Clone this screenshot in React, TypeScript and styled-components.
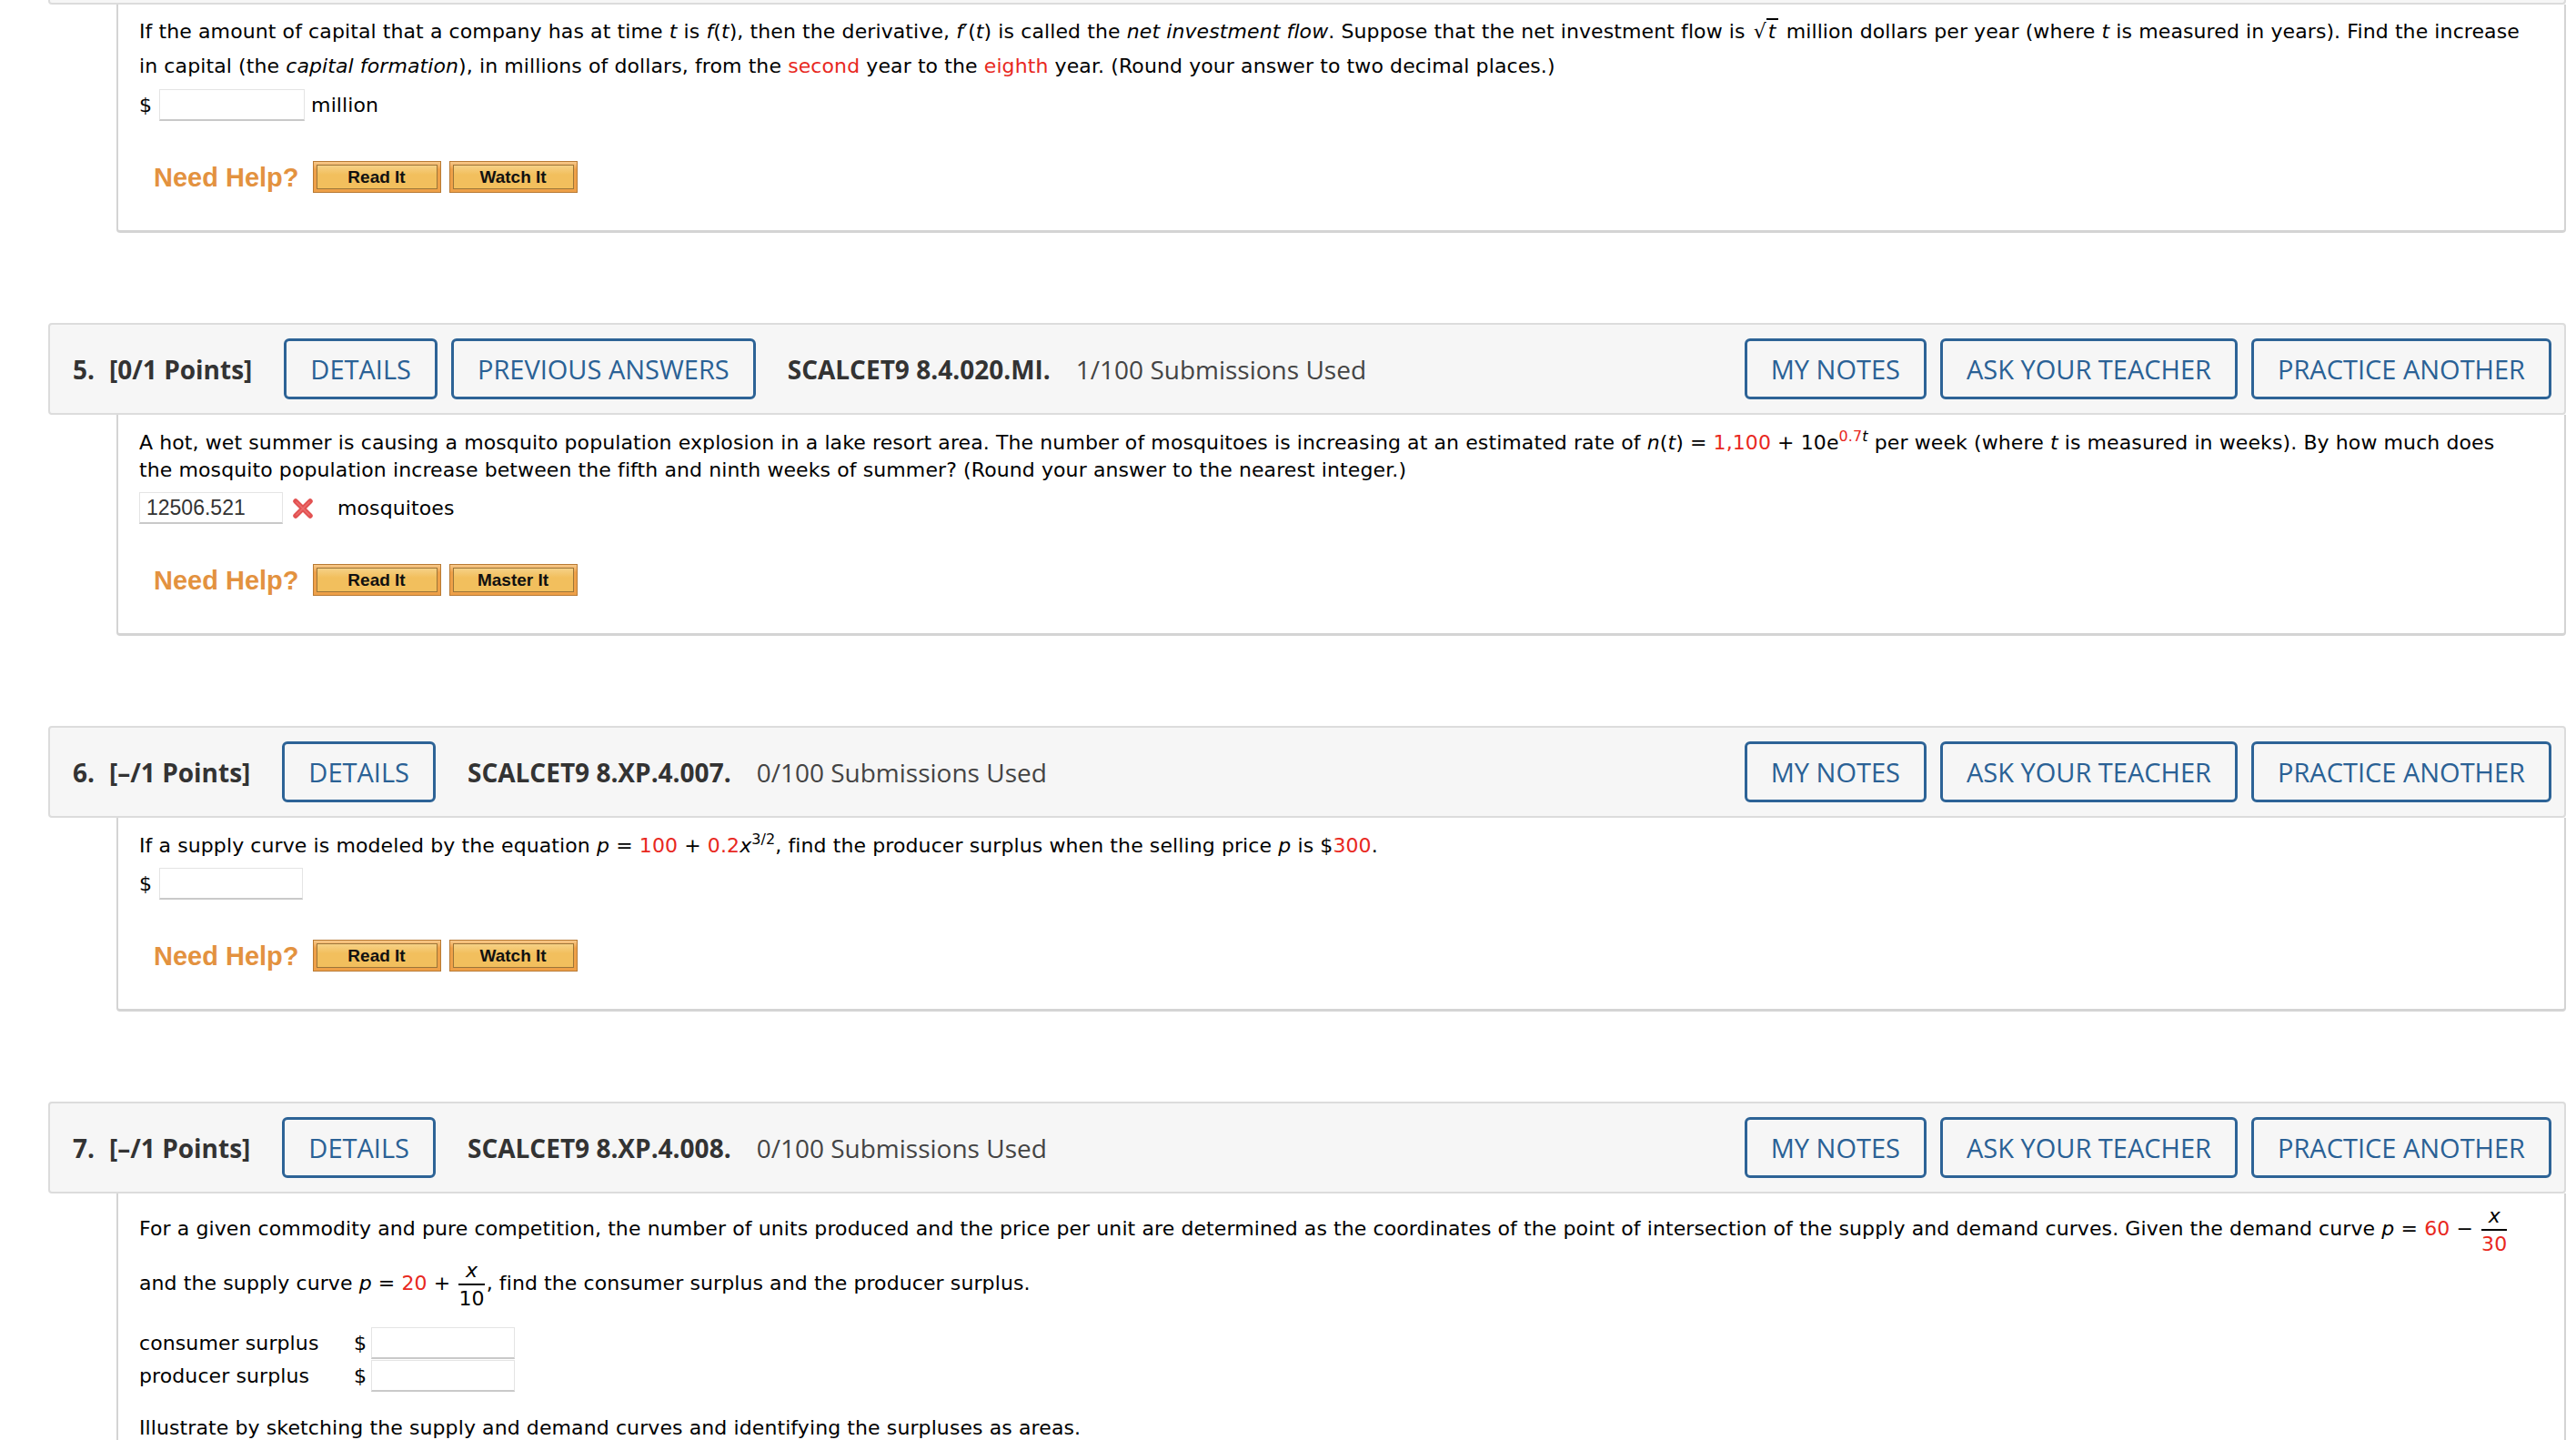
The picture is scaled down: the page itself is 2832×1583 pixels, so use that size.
import React from 'react';
import styled, { createGlobalStyle } from 'styled-components';

const GlobalStyle = createGlobalStyle`
  html, body {
    margin: 0;
    padding: 0;
    background: #fff;
  }
  body {
    font-family: "DejaVu Sans", Verdana, sans-serif;
  }
`;

const Page = styled.div`
  width: 2832px;
  height: 1583px;
  overflow: hidden;
  box-sizing: border-box;
  padding: 0 11px 0 53px;
`;

const Question = styled.section`
  margin-bottom: 99px;
`;

const HeaderStub = styled.div`
  height: 5px;
  box-sizing: border-box;
  background: #f6f6f6;
  border: 2px solid #dcdcdc;
  border-top: none;
  border-radius: 0 0 4px 4px;
`;

const Header = styled.div`
  display: flex;
  align-items: center;
  gap: 15px;
  height: 101px;
  box-sizing: border-box;
  padding: 0 14px 0 25px;
  background: #f6f6f6;
  border: 2px solid #dcdcdc;
  border-radius: 4px;
  font-family: "Open Sans", "DejaVu Sans", sans-serif;
  font-size: 28px;
  color: #333;
  white-space: nowrap;
`;

const Points = styled.div`
  font-weight: 700;
  margin-right: 20px;
  span {
    margin-right: 16px;
  }
`;

const Code = styled.div`
  font-weight: 700;
  margin-left: 20px;
`;

const Used = styled.div`
  margin-left: 13px;
  color: #444;
`;

const Spacer = styled.div`
  flex: 1;
`;

const OutlineButton = styled.button`
  height: 67px;
  box-sizing: border-box;
  padding: 0 26px;
  border: 3px solid #2d6396;
  border-radius: 6px;
  background: transparent;
  font-family: "Open Sans", "DejaVu Sans", sans-serif;
  font-size: 29px;
  color: #2a6195;
  text-transform: uppercase;
  cursor: pointer;
`;

const Body = styled.div<{ $pt?: number }>`
  margin-left: 75px;
  border: 2px solid #d4d4d4;
  border-top: none;
  border-bottom-width: 3px;
  border-radius: 0 0 4px 4px;
  padding: ${(p) => p.$pt ?? 16}px 6px 41px 23px;
  font-size: 22px;
  letter-spacing: 0.1px;
  line-height: 30px;
  color: #000;
`;

const Para = styled.p<{ $lh?: number; $mb?: number }>`
  margin: 0 0 ${(p) => p.$mb ?? 9}px;
  line-height: ${(p) => p.$lh ?? 30}px;
`;

const Red = styled.span`
  color: #e8281e;
`;

const Sup = styled.sup<{ $red?: boolean }>`
  font-size: 16px;
  line-height: 0;
  vertical-align: 9px;
  color: ${(p) => (p.$red ? '#e8281e' : 'inherit')};
`;

const Sqrt = styled.span`
  white-space: nowrap;
  margin: 0 2px;
  span {
    border-top: 2px solid #000;
    padding: 0 2px;
    font-style: italic;
  }
`;

const Frac = styled.span`
  display: inline-flex;
  flex-direction: column;
  align-items: center;
  vertical-align: middle;
  margin: 0 2px;
  line-height: 29px;
`;

const FracTop = styled.span`
  font-style: italic;
  padding: 0 4px;
`;

const FracBottom = styled.span<{ $red?: boolean }>`
  align-self: stretch;
  text-align: center;
  border-top: 2px solid #000;
  color: ${(p) => (p.$red ? '#e8281e' : 'inherit')};
`;

const AnswerRow = styled.div`
  display: flex;
  align-items: center;
  height: 35px;
`;

const Dollar = styled.span`
  margin-right: 8px;
`;

const Field = styled.div<{ $w?: number }>`
  width: ${(p) => p.$w ?? 160}px;
  height: 35px;
  box-sizing: border-box;
  border: 1px solid #e4e4e4;
  border-bottom: 2px solid #c9c9c9;
  background: #fff;
  padding: 0 7px;
  font-family: "Liberation Sans", Arial, sans-serif;
  font-size: 23px;
  letter-spacing: 0;
  line-height: 33px;
  color: #333;
`;

const Unit = styled.span<{ $ml?: number }>`
  margin-left: ${(p) => p.$ml ?? 7}px;
`;

const WrongMark = styled.svg`
  margin-left: 10px;
  flex: none;
`;

const HelpRow = styled.div`
  display: flex;
  align-items: center;
  gap: 9px;
  margin-top: 44px;
  padding-left: 16px;
`;

const NeedHelp = styled.span`
  font-family: "Liberation Sans", Arial, sans-serif;
  font-weight: 700;
  font-size: 29px;
  letter-spacing: 0;
  color: #e3923f;
  margin-right: 6px;
`;

const HelpButton = styled.button`
  width: 141px;
  height: 35px;
  box-sizing: border-box;
  padding: 3px;
  border: 1px solid #b87a34;
  background: linear-gradient(#f7c98a, #eea048 25%, #eea048);
  cursor: pointer;
  span {
    display: flex;
    align-items: center;
    justify-content: center;
    height: 100%;
    box-sizing: border-box;
    border: 1px solid #9c7538;
    background: linear-gradient(#f6d186, #f2bf5d 40%, #f2bf5d);
    font-family: "Liberation Sans", Arial, sans-serif;
    font-weight: 700;
    font-size: 19px;
    color: #111;
  }
`;

const SurplusGrid = styled.div`
  display: grid;
  grid-template-columns: 236px 19px 158px;
  row-gap: 1px;
  align-items: center;
  margin: 17px 0 25px;
`;

const Label = styled.span`
  line-height: 35px;
`;

const Cross = () => (
  <WrongMark width="24" height="24" viewBox="0 0 24 24">
    <path d="M4 4 L20 20 M20 4 L4 20" stroke="#e25252" strokeWidth="5.5" strokeLinecap="round" />
    <path d="M5 5 L19 19 M19 5 L5 19" stroke="#f07a7a" strokeWidth="1.5" strokeLinecap="round" opacity="0.7" />
  </WrongMark>
);

const HeaderButtons = ({ extra }: { extra?: string }) => (
  <>
    <OutlineButton>Details</OutlineButton>
    {extra && <OutlineButton>{extra}</OutlineButton>}
  </>
);

const QuestionHeader = ({
  num,
  points,
  code,
  used,
  extra,
}: {
  num: number;
  points: string;
  code: string;
  used: string;
  extra?: string;
}) => (
  <Header>
    <Points>
      <span>{num}.</span>[{points} Points]
    </Points>
    <HeaderButtons extra={extra} />
    <Code>{code}</Code>
    <Used>{used}</Used>
    <Spacer />
    <OutlineButton>My Notes</OutlineButton>
    <OutlineButton>Ask Your Teacher</OutlineButton>
    <OutlineButton>Practice Another</OutlineButton>
  </Header>
);

const Help = ({ second }: { second: string }) => (
  <HelpRow>
    <NeedHelp>Need Help?</NeedHelp>
    <HelpButton>
      <span>Read It</span>
    </HelpButton>
    <HelpButton>
      <span>{second}</span>
    </HelpButton>
  </HelpRow>
);

export default function App() {
  return (
    <Page>
      <GlobalStyle />

      <Question>
        <HeaderStub />
        <Body $pt={11}>
          <Para $lh={38} $mb={6}>
            If the amount of capital that a company has at time <i>t</i> is <i>f</i>(<i>t</i>), then the
            derivative, <i>f</i>′(<i>t</i>) is called the <i>net investment flow</i>. Suppose that the net
            investment flow is{' '}
            <Sqrt>
              √<span>t</span>
            </Sqrt>{' '}
            million dollars per year (where <i>t</i> is measured in years). Find the increase
            <br />
            in capital (the <i>capital formation</i>), in millions of dollars, from the <Red>second</Red> year
            to the <Red>eighth</Red> year. (Round your answer to two decimal places.)
          </Para>
          <AnswerRow>
            <Dollar>$</Dollar>
            <Field />
            <Unit>million</Unit>
          </AnswerRow>
          <Help second="Watch It" />
        </Body>
      </Question>

      <Question>
        <QuestionHeader
          num={5}
          points="0/1"
          code="SCALCET9 8.4.020.MI."
          used="1/100 Submissions Used"
          extra="Previous Answers"
        />
        <Body>
          <Para>
            A hot, wet summer is causing a mosquito population explosion in a lake resort area. The number
            of mosquitoes is increasing at an estimated rate of <i>n</i>(<i>t</i>) = <Red>1,100</Red> + 10e
            <Sup>
              <Red>0.7</Red>
              <i>t</i>
            </Sup>{' '}
            per week (where <i>t</i> is measured in weeks). By how much does
            <br />
            the mosquito population increase between the fifth and ninth weeks of summer? (Round your
            answer to the nearest integer.)
          </Para>
          <AnswerRow>
            <Field $w={158}>12506.521</Field>
            <Cross />
            <Unit $ml={26}>mosquitoes</Unit>
          </AnswerRow>
          <Help second="Master It" />
        </Body>
      </Question>

      <Question>
        <QuestionHeader num={6} points="–/1" code="SCALCET9 8.XP.4.007." used="0/100 Submissions Used" />
        <Body>
          <Para>
            If a supply curve is modeled by the equation <i>p</i> = <Red>100</Red> + <Red>0.2</Red>
            <i>x</i>
            <Sup>3/2</Sup>, find the producer surplus when the selling price <i>p</i> is $<Red>300</Red>.
          </Para>
          <AnswerRow>
            <Dollar>$</Dollar>
            <Field $w={158} />
          </AnswerRow>
          <Help second="Watch It" />
        </Body>
      </Question>

      <Question>
        <QuestionHeader num={7} points="–/1" code="SCALCET9 8.XP.4.008." used="0/100 Submissions Used" />
        <Body $pt={10}>
          <Para $mb={0}>
            For a given commodity and pure competition, the number of units produced and the price per unit
            are determined as the coordinates of the point of intersection of the supply and demand curves.
            Given the demand curve <i>p</i> = <Red>60</Red> −{' '}
            <Frac>
              <FracTop>x</FracTop>
              <FracBottom $red>30</FracBottom>
            </Frac>
            <br />
            and the supply curve <i>p</i> = <Red>20</Red> +{' '}
            <Frac>
              <FracTop>x</FracTop>
              <FracBottom>10</FracBottom>
            </Frac>
            , find the consumer surplus and the producer surplus.
          </Para>
          <SurplusGrid>
            <Label>consumer surplus</Label>
            <span>$</span>
            <Field $w={158} />
            <Label>producer surplus</Label>
            <span>$</span>
            <Field $w={158} />
          </SurplusGrid>
          <Para>Illustrate by sketching the supply and demand curves and identifying the surpluses as areas.</Para>
        </Body>
      </Question>
    </Page>
  );
}
